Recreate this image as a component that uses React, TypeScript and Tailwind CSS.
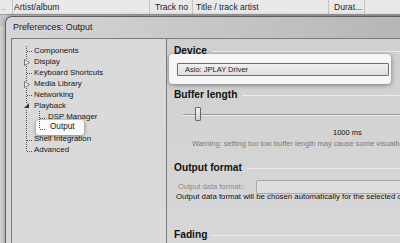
import React from "react";

const treeItems = [
  { label: "Components", child: false },
  { label: "Display", child: false },
  { label: "Keyboard Shortcuts", child: false },
  { label: "Media Library", child: false },
  { label: "Networking", child: false },
  { label: "Playback", child: false },
  { label: "DSP Manager", child: true },
  { label: "Output", child: true, selected: true },
  { label: "Shell Integration", child: false },
  { label: "Advanced", child: false },
];

function TreeLines() {
  // row centers, relative to the tree panel top
  const ys = [12, 23, 34, 45, 56, 67, 79, 90, 101, 112];
  return (
    <svg
      className="absolute left-0 top-0 z-10 pointer-events-none"
      width="155"
      height="130"
    >
      <g stroke="#555" strokeWidth="1" strokeDasharray="1 1" shapeRendering="crispEdges">
        <line x1="14.5" y1="7" x2="14.5" y2="20" />
        <line x1="14.5" y1="27" x2="14.5" y2="42" />
        <line x1="14.5" y1="49" x2="14.5" y2="64" />
        <line x1="14.5" y1="71" x2="14.5" y2="112" />
        {[0, 2, 4, 8, 9].map((i) => (
          <line key={i} x1="15" y1={ys[i] + 0.5} x2="21" y2={ys[i] + 0.5} />
        ))}
        <line x1="27.5" y1="72" x2="27.5" y2="90" />
        <line x1="28" y1="79.5" x2="34" y2="79.5" />
        <line x1="28" y1="90.5" x2="34" y2="90.5" />
      </g>
      {/* collapsed expanders */}
      <path d="M12.5 20.5 L17.5 23.5 L12.5 26.5 Z" fill="#f4f4f4" stroke="#777" />
      <path d="M12.5 42.5 L17.5 45.5 L12.5 48.5 Z" fill="#f4f4f4" stroke="#777" />
      {/* expanded */}
      <path d="M17 64 L17 69 L12 69 Z" fill="#333" />
    </svg>
  );
}

function SectionHeading({ title }: { title: string }) {
  return (
    <div className="flex items-center h-[12px] gap-[5px]">
      <span className="text-[10.2px] font-bold text-[#111] leading-none">{title}</span>
      <div className="flex-1 h-px bg-[#8a8a8a] border-b border-[#ececec]" />
    </div>
  );
}

export default function App() {
  return (
    <div
      className="w-[400px] h-[243px] overflow-hidden relative bg-[#cfcfcf]"
      style={{ fontFamily: '"Liberation Sans", Arial, sans-serif' }}
    >
      {/* playlist header */}
      <div className="flex h-[15px] bg-[#e9e9e9] border-b border-[#9c9c9c] text-[8.6px] text-[#222] items-center">
        <div className="w-[13px] h-full border-r border-[#c4c4c4] flex items-center pl-[1px] text-[#777]">..</div>
        <div className="w-[137px] h-full border-r border-[#c4c4c4] flex items-center pl-[1px]">Artist/album</div>
        <div className="w-[43px] h-full border-r border-[#c4c4c4] flex items-center pl-[5px]">Track no</div>
        <div className="w-[136px] h-full border-r border-[#c4c4c4] flex items-center pl-[3px] overflow-hidden whitespace-nowrap">
          Title / track artist
        </div>
        <div className="w-[36px] h-full border-r border-[#c4c4c4] flex items-center pl-[5px]">Durat...</div>
        <div className="flex-1" />
      </div>

      {/* playlist rows (seen through the glass frame) */}
      <div className="h-[11px] bg-gradient-to-r from-[#c4c4c4] via-[#aaaaaa] to-[#9e9e9e]" />
      <div className="h-[11px] bg-gradient-to-r from-[#cdcdcd] via-[#bababa] to-[#b4b4b4]" />

      {/* preferences dialog */}
      <div className="absolute left-[5px] top-[16px] w-[420px] h-[240px] rounded-tl-[7px] border-l border-t border-[#5f5f5f] bg-gradient-to-r from-[#d6d6d6] via-[#c6c6c6] to-[#b4b4b4] shadow-[0_0_4px_rgba(0,0,0,0.35)]">
        <div className="h-[21px] flex items-center pl-[7px] text-[8.9px] text-[#1a1a1a]">
          Preferences: Output
        </div>
        <div className="flex h-[219px] ml-[5px] border-t border-l border-[#7c7c7c] bg-[#d3d3d3]">
          {/* tree */}
          <div className="relative w-[155px] h-full bg-[#dadada] border-r border-[#7a7a7a] pt-[6px] text-[7.9px] text-[#151515]">
            <TreeLines />
            {treeItems.map((it) => (
              <div
                key={it.label}
                className={`relative h-[11px] flex items-center whitespace-nowrap ${it.child ? "pl-[36px]" : "pl-[22px]"}`}
              >
                {it.selected && (
                  <div className="absolute left-[24px] top-[-2px] w-[48px] h-[15px] rounded-[3px] bg-[#fbfbfb] shadow-[0_1px_4px_rgba(0,0,0,0.45)]" />
                )}
                <span className={`relative ${it.selected ? "pl-[2px] text-[8.2px]" : ""}`}>{it.label}</span>
              </div>
            ))}
          </div>

          {/* settings */}
          <div className="flex-1 pl-[7px] pt-[6px] bg-gradient-to-b from-[#d0d0d0] to-[#d8d8d8] text-[7.5px]">
            <SectionHeading title="Device" />
            <div className="ml-[-5px] mt-[-3px] w-[222px] h-[30px] rounded-[4px] bg-[#f6f6f6] shadow-[0_1px_5px_rgba(0,0,0,0.45)] pt-[9px] pl-[8px] pr-[2px]">
              <div className="h-[13px] border border-[#6e6e6e] rounded-[1px] bg-gradient-to-b from-[#f0f0f0] to-[#dedede] flex items-center pl-[7px] text-[#222]">
                Asio: JPLAY Driver
              </div>
            </div>

            <div className="mt-[5px]">
              <SectionHeading title="Buffer length" />
            </div>
            <div className="relative h-[15px] mt-[6px] ml-[9px] flex items-center">
              <div className="flex-1 h-[2px] bg-[#9a9a9a] border-b border-[#eeeeee]" />
              <div className="absolute left-[12px] top-0 w-[6px] h-[14px] rounded-[1px] border border-[#6a6a6a] bg-gradient-to-b from-[#f4f4f4] to-[#d0d0d0]" />
            </div>
            <div className="h-[11px] mt-[5px] flex items-center pl-[159px] text-[#111]">1000 ms</div>
            <div className="h-[11px] flex items-center pl-[18px] whitespace-nowrap text-[#7a7a7a]">
              Warning: setting too low buffer length may cause some visualb
            </div>

            <div className="mt-[13px]">
              <SectionHeading title="Output format" />
            </div>
            <div className="flex items-center h-[14px] mt-[6px] pl-[4px]">
              <span className="w-[78px] text-[#8a8a8a] whitespace-nowrap">Output data format::</span>
              <div className="flex-1 h-[14px] rounded-[2px] border border-[#a8a8a8] bg-[#dedede]" />
            </div>
            <div className="h-[9px] mt-[-2px] flex items-center pl-[2px] whitespace-nowrap text-[#111] text-[7.8px]">
              Output data format will be chosen automatically for the selected de
            </div>

            <div className="mt-[28px]">
              <SectionHeading title="Fading" />
            </div>
          </div>
        </div>
      </div>
    </div>
  );
}
